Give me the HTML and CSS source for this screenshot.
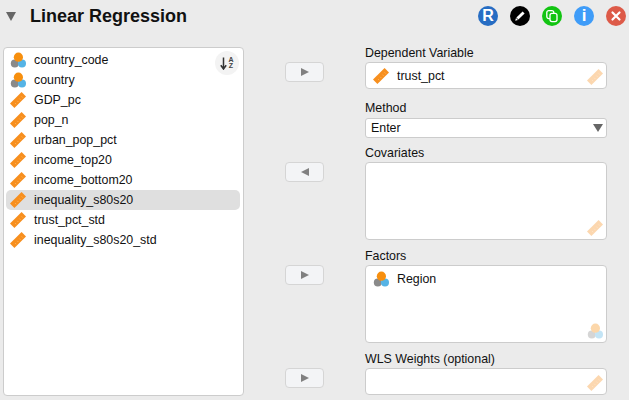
FILE: index.html
```html
<!DOCTYPE html>
<html lang="en">
<head>
    <meta charset="UTF-8">
    <title>Linear Regression</title>
    <link rel="stylesheet" href="styles.css">
</head>
<body>
    <svg class="defs" width="0" height="0">
        <symbol id="ruler" viewBox="0 0 16 16">
            <path d="M11.6 0L16 4.4L4.4 16L0 11.6Z" fill="#f78f1e"/>
            <path d="M11.6 4.4L12.8 5.6M9.4 6.6L10.6 7.8M7.2 8.8L8.4 10M5 11L6.2 12.2" stroke="#fbb565" stroke-width="0.8" fill="none"/>
        </symbol>
        <symbol id="nominal" viewBox="0 0 16 16">
            <circle cx="4.8" cy="11.4" r="4" fill="#8a8a8a"/>
            <circle cx="12" cy="11.4" r="4" fill="#55b3e5"/>
            <circle cx="8.4" cy="5.2" r="4.6" fill="#f78f0e"/>
        </symbol>
    </svg>

    <header class="title-bar">
        <span class="collapse"></span>
        <h1>Linear Regression</h1>
        <div class="actions">
            <span class="action action-r">R</span>
            <span class="action action-edit">
                <svg width="12" height="12" viewBox="0 0 12 12"><path d="M8.6 1.4L10.6 3.4L4.4 9.4L2.4 7.4Z" fill="#fff"/><path d="M2 8L4 10L1.2 10.8Z" fill="#fff"/></svg>
            </span>
            <span class="action action-copy">
                <svg width="14" height="14" viewBox="0 0 14 14" fill="none" stroke="#fff" stroke-width="1.3"><rect x="1.8" y="1.6" width="7" height="8" rx="2"/><rect x="5" y="4.4" width="7" height="8.2" rx="2" fill="#12c412"/></svg>
            </span>
            <span class="action action-info">i</span>
            <span class="action action-close">
                <svg width="12" height="12" viewBox="0 0 12 12"><path d="M2.5 2.5L9.5 9.5M9.5 2.5L2.5 9.5" stroke="#fff" stroke-width="2.2" stroke-linecap="round"/></svg>
            </span>
        </div>
    </header>

    <main class="form">
        <section class="var-list">
            <button class="sort-btn" type="button">
                <svg width="7" height="13" viewBox="0 0 7 13"><path d="M3.5 0.5V11M0.8 8.2L3.5 12L6.2 8.2" stroke="#333" stroke-width="1.5" fill="none"/></svg>
                <span class="sort-letters">A<br>Z</span>
            </button>
            <ul>
                <li><svg class="icon"><use href="#nominal"/></svg>country_code</li>
                <li><svg class="icon"><use href="#nominal"/></svg>country</li>
                <li><svg class="icon"><use href="#ruler"/></svg>GDP_pc</li>
                <li><svg class="icon"><use href="#ruler"/></svg>pop_n</li>
                <li><svg class="icon"><use href="#ruler"/></svg>urban_pop_pct</li>
                <li><svg class="icon"><use href="#ruler"/></svg>income_top20</li>
                <li><svg class="icon"><use href="#ruler"/></svg>income_bottom20</li>
                <li class="selected"><svg class="icon"><use href="#ruler"/></svg>inequality_s80s20</li>
                <li><svg class="icon"><use href="#ruler"/></svg>trust_pct_std</li>
                <li><svg class="icon"><use href="#ruler"/></svg>inequality_s80s20_std</li>
            </ul>
        </section>

        <section class="targets">
            <div class="target target-dep">
                <label>Dependent Variable</label>
                <button class="arrow" type="button"><span class="tri-right"></span></button>
                <div class="box box-single">
                    <div class="item"><svg class="icon"><use href="#ruler"/></svg>trust_pct</div>
                    <svg class="hint"><use href="#ruler"/></svg>
                </div>
            </div>
            <div class="target target-method">
                <label>Method</label>
                <div class="select">Enter<span class="select-caret"></span></div>
            </div>
            <div class="target">
                <label>Covariates</label>
                <button class="arrow" type="button"><span class="tri-left"></span></button>
                <div class="box box-tall">
                    <svg class="hint"><use href="#ruler"/></svg>
                </div>
            </div>
            <div class="target">
                <label>Factors</label>
                <button class="arrow" type="button"><span class="tri-right"></span></button>
                <div class="box box-tall">
                    <div class="item"><svg class="icon"><use href="#nominal"/></svg>Region</div>
                    <svg class="hint"><use href="#nominal"/></svg>
                </div>
            </div>
            <div class="target">
                <label>WLS Weights (optional)</label>
                <button class="arrow" type="button"><span class="tri-right"></span></button>
                <div class="box box-single">
                    <svg class="hint"><use href="#ruler"/></svg>
                </div>
            </div>
        </section>
    </main>
</body>
</html>
```

FILE: styles.css
```css
html, body {
    margin: 0;
    height: 400px;
    overflow: hidden;
}
body {
    background-color: #ebebeb;
    color: #111;
    font-family: "Liberation Sans", Arial, sans-serif;
    font-size: 12.4px;
}
.defs {
    display: block;
    height: 0;
}

/* title */
.title-bar {
    display: flex;
    align-items: center;
    height: 32px;
    padding-left: 6px;
}
.collapse {
    width: 0;
    height: 0;
    border-left: 5px solid transparent;
    border-right: 5px solid transparent;
    border-top: 9px solid #666;
    margin-right: 14px;
}
h1 {
    margin: 0;
    font-size: 18px;
    font-weight: bold;
    color: #111;
}
.actions {
    display: flex;
    gap: 12px;
    margin-left: auto;
    margin-right: 3px;
}
.action {
    display: flex;
    align-items: center;
    justify-content: center;
    width: 20px;
    height: 20px;
    border-radius: 50%;
    color: #fff;
    font-weight: bold;
}
.action-r {
    background-color: #276dc3;
    font-size: 16px;
}
.action-edit {
    background-color: #000;
}
.action-copy {
    background-color: #12c412;
}
.action-info {
    background-color: #3f9cf8;
    font-size: 17px;
}
.action-close {
    background-color: #dd5a48;
}

/* layout */
.form {
    display: flex;
    padding: 15px 0 0 3px;
}

/* variable list */
.var-list {
    position: relative;
    box-sizing: border-box;
    width: 241px;
    height: 349px;
    background: #fff;
    border: 1px solid #ccc;
    border-radius: 4px;
}
.var-list ul {
    list-style: none;
    margin: 0;
    padding: 2px 3px 0 2px;
}
.var-list li {
    display: flex;
    align-items: center;
    height: 20px;
    border-radius: 5px;
    padding-left: 4px;
}
.var-list li.selected {
    background-color: #dfdfdf;
}
.icon {
    width: 16px;
    height: 16px;
    margin-right: 8px;
    flex: none;
}
.sort-btn {
    position: absolute;
    top: 3px;
    right: 4px;
    display: flex;
    align-items: center;
    justify-content: center;
    gap: 1px;
    width: 24px;
    height: 24px;
    padding: 0;
    border: none;
    border-radius: 50%;
    background-color: #f3f3f3;
}
.sort-letters {
    font-family: "Liberation Sans", Arial, sans-serif;
    font-size: 7px;
    font-weight: bold;
    line-height: 6px;
    color: #444;
}

/* assigned variables */
.targets {
    width: 322px;
    margin-left: 41px;
}
.target {
    display: grid;
    grid-template-columns: 39px 242px;
    column-gap: 41px;
    margin-bottom: 10px;
}
.target label {
    grid-column: 2;
    height: 15px;
    line-height: 12px;
    white-space: nowrap;
}
.target-dep {
    margin-bottom: 14px;
}
.target-method {
    margin-bottom: 9px;
}
.target-method label {
    line-height: 10px;
}
.arrow {
    grid-column: 1;
    box-sizing: border-box;
    display: flex;
    align-items: center;
    justify-content: center;
    width: 39px;
    height: 20px;
    padding: 0;
    background-color: #f3f4f6;
    border: 1px solid #d5d5d5;
    border-radius: 4px;
}
.tri-right, .tri-left {
    width: 0;
    height: 0;
    border-top: 4px solid transparent;
    border-bottom: 4px solid transparent;
}
.tri-right {
    border-left: 8px solid #808080;
}
.tri-left {
    border-right: 8px solid #808080;
}
.box {
    grid-column: 2;
    position: relative;
    box-sizing: border-box;
    background: #fff;
    border: 1px solid #ccc;
    border-radius: 4px;
}
.box-single {
    height: 27px;
}
.box-tall {
    height: 78px;
}
.item {
    display: flex;
    align-items: center;
    height: 20px;
    padding: 3px 0 0 7px;
}
.item .icon {
    margin-right: 8px;
}
.hint {
    position: absolute;
    right: 3px;
    bottom: 3px;
    width: 16px;
    height: 16px;
    opacity: 0.35;
}
.select {
    grid-column: 2;
    position: relative;
    box-sizing: border-box;
    height: 20px;
    line-height: 18px;
    padding-left: 5px;
    background: #fff;
    border: 1px solid #ccc;
    border-radius: 3px;
}
.select-caret {
    position: absolute;
    top: 5px;
    right: 3px;
    width: 0;
    height: 0;
    border-left: 5px solid transparent;
    border-right: 5px solid transparent;
    border-top: 8px solid #666;
}
```
